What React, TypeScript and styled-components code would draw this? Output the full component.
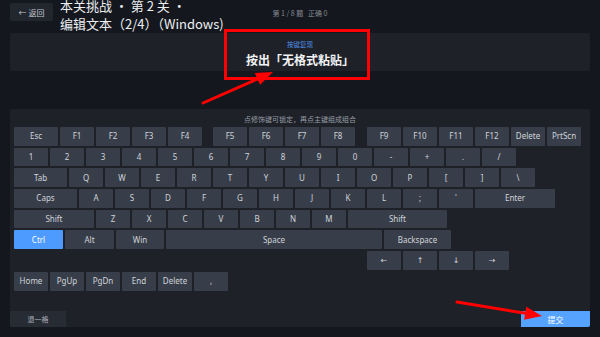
import React from 'react'
import styled, { createGlobalStyle } from 'styled-components'

type KeyDef = { label: string; w?: number; active?: boolean; gap?: number }

const rows: KeyDef[][] = [
  [
    { label: 'Esc', w: 44 },
    { label: 'F1' }, { label: 'F2' }, { label: 'F3' }, { label: 'F4' },
    { label: '', gap: 7 },
    { label: 'F5' }, { label: 'F6' }, { label: 'F7' }, { label: 'F8' },
    { label: '', gap: 8 },
    { label: 'F9' }, { label: 'F10' }, { label: 'F11' }, { label: 'F12' },
    { label: 'Delete' }, { label: 'PrtScn' },
  ],
  ['1', '2', '3', '4', '5', '6', '7', '8', '9', '0', '-', '+', '.', '/'].map((l) => ({ label: l })),
  [{ label: 'Tab', w: 53 }, ...['Q', 'W', 'E', 'R', 'T', 'Y', 'U', 'I', 'O', 'P', '[', ']', '\\'].map((l) => ({ label: l }))],
  [
    { label: 'Caps', w: 63 },
    ...['A', 'S', 'D', 'F', 'G', 'H', 'J', 'K', 'L', ';', "'"].map((l) => ({ label: l })),
    { label: 'Enter', w: 80 },
  ],
  [
    { label: 'Shift', w: 80 },
    ...['Z', 'X', 'C', 'V', 'B', 'N', 'M'].map((l) => ({ label: l })),
    { label: 'Shift', w: 99 },
  ],
  [
    { label: 'Ctrl', w: 49, active: true },
    { label: 'Alt', w: 49 },
    { label: 'Win', w: 48 },
    { label: 'Space', w: 216 },
    { label: 'Backspace', w: 67 },
  ],
  [
    { label: '', gap: 351 },
    { label: '←' }, { label: '↑' }, { label: '↓' }, { label: '→' },
  ],
  [
    { label: 'Home' }, { label: 'PgUp' }, { label: 'PgDn' }, { label: 'End' },
    { label: 'Delete' }, { label: ',' },
  ],
]

// arrow: line plus a triangle head at (x2, y2)
function arrowHead(x1: number, y1: number, x2: number, y2: number, len = 17, half = 6.5) {
  const dx = x2 - x1
  const dy = y2 - y1
  const d = Math.hypot(dx, dy)
  const ux = dx / d
  const uy = dy / d
  const bx = x2 - ux * len
  const by = y2 - uy * len
  return {
    line: { x1, y1, x2: bx + ux * 2, y2: by + uy * 2 },
    points: `${x2},${y2} ${bx - uy * half},${by + ux * half} ${bx + uy * half},${by - ux * half}`,
  }
}

function App() {
  const a1 = arrowHead(203, 103, 273, 72)
  const a2 = arrowHead(457, 302, 542, 316)

  return (
    <Page>
      <GlobalStyle />
      <Header>
        <HeaderLeft>
          <BackButton>← 返回</BackButton>
          <Title>
            本关挑战 · 第 2 关 ·
            <br />
            编辑文本（2/4）（Windows)
          </Title>
        </HeaderLeft>
        <Counter>第 1 / 8 题&nbsp;&nbsp;&nbsp;正确 0</Counter>
        <div />
      </Header>

      <PromptPanel>
        <PromptLabel>按键复现</PromptLabel>
        <PromptText>按出「无格式粘贴」</PromptText>
      </PromptPanel>

      <KeyboardPanel>
        <Hint>点修饰键可锁定，再点主键组成组合</Hint>
        <Keys>
          {rows.map((row, i) => (
            <Row key={i}>
              {row.map((k, j) =>
                k.gap ? (
                  <Spacer key={j} $w={k.gap} />
                ) : (
                  <Key key={j} $w={k.w ?? 34} $active={!!k.active}>
                    {k.label}
                  </Key>
                )
              )}
            </Row>
          ))}
        </Keys>
        <Footer>
          <StepBack>退一格</StepBack>
          <Submit>提交</Submit>
        </Footer>
      </KeyboardPanel>

      <RedBox />
      <Overlay width="600" height="337" viewBox="0 0 600 337">
        <line {...a1.line} stroke="#f00" strokeWidth="3" strokeLinecap="round" />
        <polygon points={a1.points} fill="#f00" />
        <line {...a2.line} stroke="#f00" strokeWidth="3" strokeLinecap="round" />
        <polygon points={a2.points} fill="#f00" />
      </Overlay>
    </Page>
  )
}

export default App

const GlobalStyle = createGlobalStyle`
  body {
    margin: 0;
    background: #14171d;
    font-family: "Noto Sans", "Noto Sans CJK SC", sans-serif;
  }
`

const Page = styled.div`
  position: relative;
  width: 600px;
  height: 337px;
  box-sizing: border-box;
  padding: 0 10px 10px;
  display: flex;
  flex-direction: column;
  overflow: hidden;
  background: #14171d;
`

const Header = styled.div`
  height: 33px;
  display: grid;
  grid-template-columns: 1fr auto 1fr;
`

const HeaderLeft = styled.div`
  display: flex;
  align-items: flex-start;
  gap: 7px;
`

const BackButton = styled.button`
  margin-top: 3px;
  width: 43px;
  height: 18px;
  padding: 0;
  border: none;
  border-radius: 2px;
  background: #22262e;
  color: #c3c7ce;
  font-family: "Noto Sans", "Noto Sans CJK SC", sans-serif;
  font-size: 8px;
`

const Title = styled.div`
  margin-top: -3px;
  font-family: "Noto Sans CJK SC", sans-serif;
  font-size: 13px;
  line-height: 18px;
  color: #eceef2;
  white-space: nowrap;
`

const Counter = styled.div`
  margin-top: 8px;
  font-family: "Noto Sans CJK SC", sans-serif;
  font-size: 7px;
  line-height: 10px;
  color: #858a94;
`

const PromptPanel = styled.div`
  height: 38px;
  border-radius: 2px;
  background: #1e2128;
  display: flex;
  flex-direction: column;
  align-items: center;
  padding-top: 7px;
  box-sizing: border-box;
`

const PromptLabel = styled.div`
  font-family: "Noto Sans CJK SC", sans-serif;
  font-size: 6.5px;
  line-height: 8px;
  color: #4f8fe6;
`

const PromptText = styled.div`
  margin-top: 4px;
  font-family: "Noto Sans CJK SC", sans-serif;
  font-size: 12px;
  line-height: 16px;
  font-weight: 700;
  color: #f2f3f5;
`

const KeyboardPanel = styled.div`
  margin-top: 38px;
  flex: 1;
  border-radius: 2px;
  background: #1e2128;
  display: flex;
  flex-direction: column;
  overflow: hidden;
`

const Hint = styled.div`
  margin-top: 5px;
  text-align: center;
  font-family: "Noto Sans CJK SC", sans-serif;
  font-size: 7px;
  line-height: 10px;
  color: #979ca6;
`

const Keys = styled.div`
  margin-top: 3px;
  padding: 0 4px;
  display: flex;
  flex-direction: column;
  gap: 2px;
`

const Row = styled.div`
  display: flex;
  gap: 2px;
`

const Spacer = styled.div<{ $w: number }>`
  width: ${(p) => p.$w}px;
  flex-shrink: 0;
`

const Key = styled.button<{ $w: number; $active: boolean }>`
  width: ${(p) => p.$w}px;
  height: 18.7px;
  flex-shrink: 0;
  padding: 0;
  border: none;
  border-radius: 1px;
  background: ${(p) => (p.$active ? '#4d9bff' : '#383e49')};
  color: ${(p) => (p.$active ? '#ffffff' : '#cfd3d9')};
  font-family: "Noto Sans", "DejaVu Sans", sans-serif;
  font-size: 8px;
  line-height: 18px;
`

const Footer = styled.div`
  margin-top: auto;
  height: 16px;
  display: flex;
  justify-content: space-between;
`

const StepBack = styled.button`
  width: 56px;
  height: 16px;
  padding: 0;
  border: none;
  background: #272b34;
  color: #a7acb5;
  font-family: "Noto Sans CJK SC", sans-serif;
  font-size: 7px;
`

const Submit = styled.button`
  width: 69px;
  height: 16px;
  padding: 0;
  border: none;
  background: #55a2ff;
  color: #ffffff;
  font-family: "Noto Sans CJK SC", sans-serif;
  font-size: 8px;
`

const RedBox = styled.div`
  position: absolute;
  left: 224px;
  top: 29px;
  width: 146px;
  height: 51px;
  box-sizing: border-box;
  border: 3px solid #f00;
  pointer-events: none;
`

const Overlay = styled.svg`
  position: absolute;
  left: 0;
  top: 0;
  pointer-events: none;
`
